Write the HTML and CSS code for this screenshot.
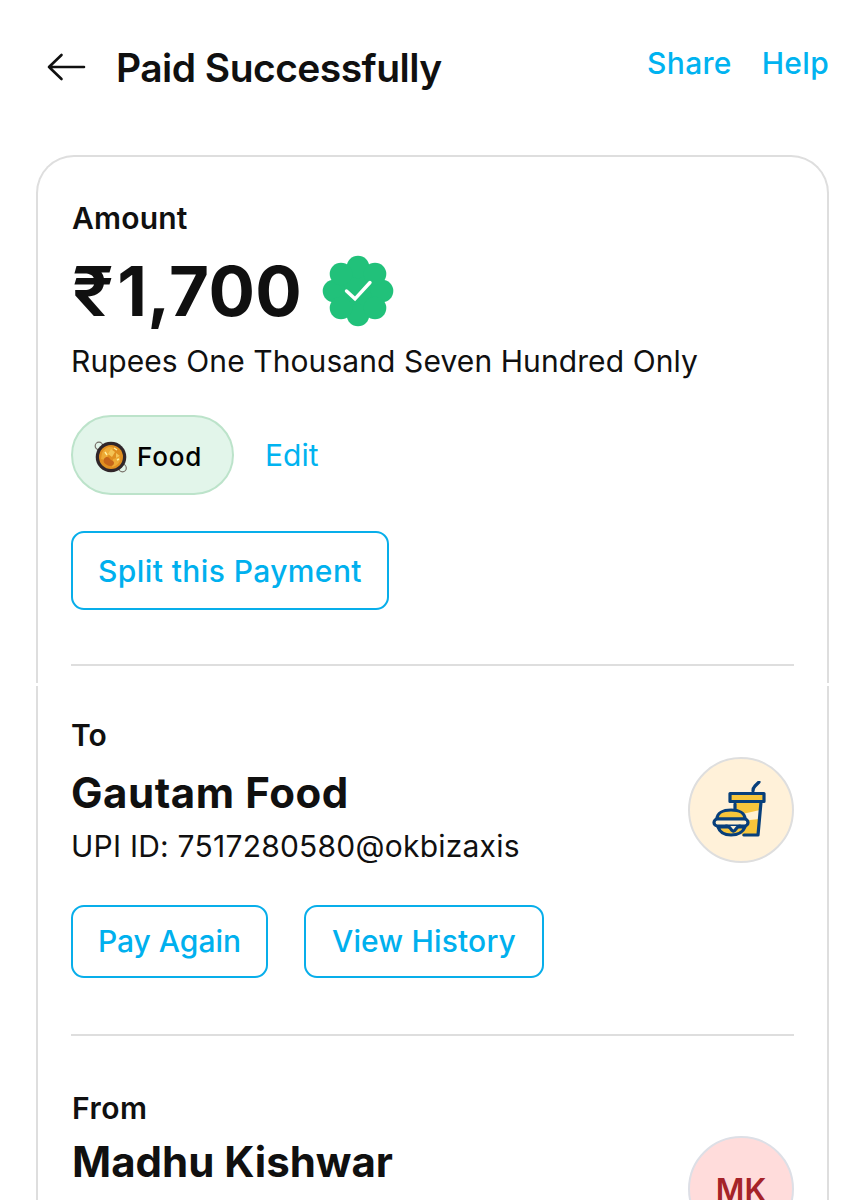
FILE: index.html
```html
<!DOCTYPE html>
<html lang="en">
<head>
<meta charset="utf-8">
<title>Paid Successfully</title>
<link rel="stylesheet" href="styles.css">
</head>
<body>
<header class="topbar">
  <svg class="back" viewBox="0 0 40 30" fill="none" stroke="#101010" stroke-width="2.6" stroke-linecap="round" stroke-linejoin="round"><path d="M38 15H3M15.500 3 3 15l12.500 12"/></svg>
  <h1 class="title">Paid Successfully</h1>
  <nav class="links"><a class="link share">Share</a><a class="link help">Help</a></nav>
</header>
<main class="receipt">
  <section class="card card-top">
    <div class="label amount-label">Amount</div>
    <div class="amount-row">
      <span class="amount"><span class="rupee">₹</span>1,700</span>
      <svg class="badge" viewBox="-36 -36 72 72">
        <g fill="#21c17a"><circle r="27"/><circle cy="-24" r="11.3"/><circle cy="24" r="11.3"/><circle cx="-24" r="11.3"/><circle cx="24" r="11.3"/><circle cx="17" cy="-17" r="11.3"/><circle cx="-17" cy="-17" r="11.3"/><circle cx="17" cy="17" r="11.3"/><circle cx="-17" cy="17" r="11.3"/></g>
        <path d="M-11.500 0-3 7.800 12-8.500" fill="none" stroke="#fff" stroke-width="3.4" stroke-linecap="round"/>
      </svg>
    </div>
    <div class="body words">Rupees One Thousand Seven Hundred Only</div>
    <div class="tag-row">
      <span class="tag">
        <svg class="pan" viewBox="0 0 34 34">
          <g fill="none" stroke="#777069" stroke-width="1.2"><circle cx="5" cy="6" r="3.8"/><circle cx="28.5" cy="28" r="3.8"/></g>
          <circle cx="17" cy="17" r="15.3" fill="#30262a"/>
          <circle cx="17" cy="17" r="12" fill="#e08f20"/>
          <path d="M8 13c3-6 8-7 12-5l-4 5-5 7-4-1zM19 19l7-2c1 5-3 9-8 10z" fill="#edaa35"/>
          <path d="M10 19c2-3 5-2 6 0s4 1 4 4-4 4-7 2-4-3-3-6z" fill="#c5651a"/>
          <path d="m17 9 4 3-3 5-4-3zM22 13l4 3-4 2z" fill="#f4c455"/>
          <path d="m20 8 3 2M11 12l2 3M23 20l2-1" stroke="#fff0a2" stroke-width="1.4"/>
        </svg>
        <span class="tag-text">Food</span>
      </span>
      <a class="link edit">Edit</a>
    </div>
    <button class="btn split"><span>Split this Payment</span></button>
    <hr class="rule">
  </section>
  <section class="card card-rest">
    <div class="party">
      <div>
        <div class="label to-label">To</div>
        <div class="name gautam">Gautam Food</div>
        <div class="body upi">UPI ID: 7517280580@okbizaxis</div>
      </div>
      <div class="avatar meal">
        <svg class="meal-icon" viewBox="0 0 56 58" fill="none" stroke="#073f7b" stroke-width="3.2" stroke-linejoin="round" stroke-linecap="round">
          <path d="M22 21h27l-3 34H30l-3-17z" fill="#f6c53b" stroke="none"/>
          <path d="m26 34 22-5-1 9-18 2z" fill="#fff1d1" stroke="none"/>
          <path d="M23 23v7M49 21l-3 33H32"/>
          <path d="M18 12.500h34v8H18z" fill="#f6c53b"/>
          <path d="M41 10q0-3 2-5l4-4"/>
          <path d="M5 38c0-6 6-9 14-9s14 3 14 9z" fill="#f6c53b"/>
          <path d="M6 46c2 6 6 8 13 8s12-3 14-8z" fill="#f6c53b"/>
          <rect x="2" y="38" width="34" height="7" rx="3.500" fill="#fff1d1"/>
          <path d="M14 45c5 0 4 4 7 5s3-5 7-5" fill="#fff1d1"/>
        </svg>
      </div>
    </div>
    <div class="actions">
      <button class="btn pay"><span>Pay Again</span></button>
      <button class="btn history"><span>View History</span></button>
    </div>
    <hr class="rule">
    <div class="party from">
      <div>
        <div class="label from-label">From</div>
        <div class="name madhu">Madhu Kishwar</div>
      </div>
      <div class="avatar initials">MK</div>
    </div>
  </section>
</main>
</body>
</html>
```
FILE: styles.css
```css
* { box-sizing: border-box; }
body { margin: 0; height: 1200px; overflow: hidden; background: #fff; color: #101010; font-family: Inter, "Liberation Sans", sans-serif; white-space: nowrap; }
.topbar { display: flex; align-items: flex-start; height: 155px; padding: 43px 36px 0 46px; }
.back { width: 40px; height: 30px; margin-top: 9px; flex: none; }
.title { margin: 0 0 0 30px; font-size: 39px; line-height: 50px; font-weight: 600; letter-spacing: -0.55px; }
.links { display: flex; gap: 30px; margin-left: auto; line-height: 40px; }
.links .link { font-weight: 450; letter-spacing: .3px; }
.link { color: #00b3f0; font-size: 30px; }
.card { border: 2px solid #dedede; padding: 0 33px; }
.receipt { width: 793px; margin-left: 36px; }
.card-top { height: 528px; border-bottom: 0; border-radius: 38px 38px 0 0; padding-top: 41px; }
.card-rest { height: 515px; margin-top: 3px; border-top: 0; border-bottom: 0; padding-top: 29px; }
.label { font-size: 30px; line-height: 40px; font-weight: 600; }
.amount-label { padding-left: 1px; letter-spacing: .2px; }
.amount-row { display: flex; align-items: center; height: 72px; margin-top: 17px; }
.amount { width: 251px; font-size: 69px; line-height: 72px; font-weight: 700; letter-spacing: .4px; }
.rupee { display: inline-block; margin: 0 6px 0 1px; font-weight: 600; transform: scaleX(1.08); transform-origin: left; }
.badge { width: 72px; height: 72px; flex: none; }
.body { font-size: 30px; line-height: 40px; font-weight: 400; }
.words { margin-top: 14px; letter-spacing: .09px; }
.tag-row { display: flex; align-items: center; gap: 31px; margin-top: 34px; }
.tag { display: flex; align-items: center; gap: 9px; width: 163px; height: 80px; padding: 3px 0 0 21px; border: 2px solid #bce3ca; border-radius: 40px; background: #e2f5ea; font-size: 26px; font-weight: 500; letter-spacing: .8px; color: #000; }
.pan { width: 34px; height: 34px; }
.btn { display: flex; align-items: center; justify-content: center; margin: 0; padding: 0; border: 2px solid #08aeea; border-radius: 13px; background: #fff; color: #00b0ee; font: 500 30px/40px Inter, "Liberation Sans", sans-serif; white-space: nowrap; }
.split { width: 318px; height: 79px; margin-top: 36px; letter-spacing: .4px; }
.rule { height: 2px; margin: 54px 0 0; border: 0; background: #dedede; }
.party { display: flex; justify-content: space-between; }
.name { font-size: 42px; line-height: 54px; font-weight: 700; margin-top: 10px; }
.gautam { margin-top: 11px; letter-spacing: .55px; }
.madhu { padding-left: 1px; }
.upi { margin-top: 6px; letter-spacing: .23px; }
.avatar { display: flex; align-items: center; justify-content: center; flex: none; width: 106px; height: 106px; border: 2px solid #dedede; border-radius: 50%; }
.meal { margin-top: 42px; background: #fff1d9; }
.meal-icon { width: 56px; height: 58px; margin-left: -2px; }
.actions { display: flex; gap: 36px; margin-top: 39px; }
.pay { width: 197px; height: 73px; padding-bottom: 2px; }
.history { width: 240px; height: 73px; padding-bottom: 2px; letter-spacing: .15px; }
.actions + .rule { margin-top: 56px; }
.from { margin-top: 52px; }
.from-label { letter-spacing: .5px; padding-left: 1px; }
.from .name { margin-top: 7px; }
.initials { margin-top: 48px; background: #ffdcdb; border-color: #dddfe6; color: #a52329; font-size: 31px; font-weight: 600; }
```
